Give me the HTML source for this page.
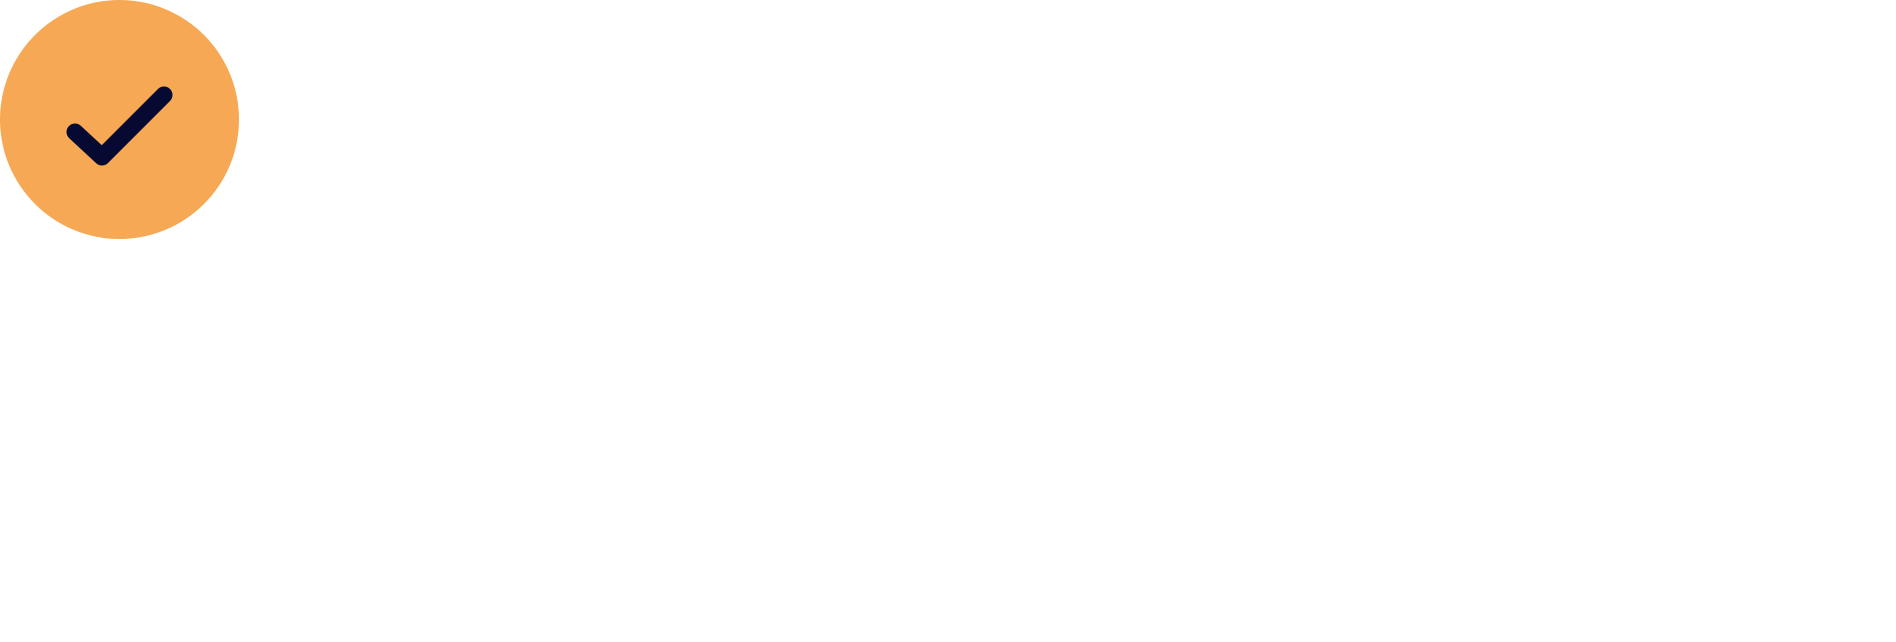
<!DOCTYPE html>
<html><head><style>html,body{margin:0;padding:0;background:#fff;width:1896px;height:642px;overflow:hidden}</style></head>
<body>
<svg width="1896" height="642" style="position:absolute;left:0;top:0">
<circle cx="119.5" cy="119.5" r="119.5" fill="#F6A854"/>
<path d="M75 132 L102 157 L164 95" fill="none" stroke="#060A33" stroke-width="17" stroke-linecap="round" stroke-linejoin="round"/>
</svg>
</body></html>
